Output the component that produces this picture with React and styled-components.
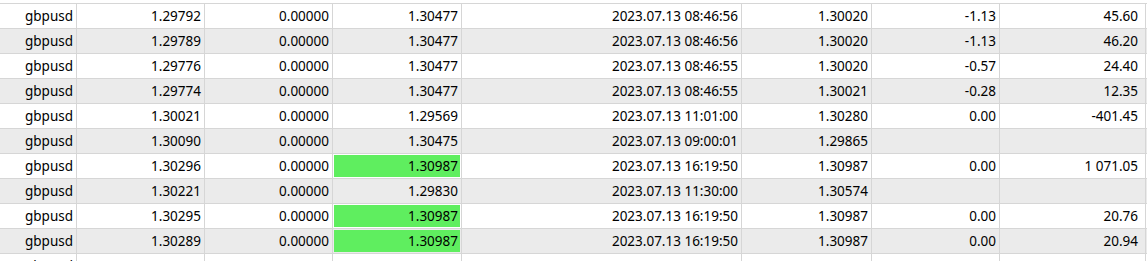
import React from "react";
import styled, { createGlobalStyle } from "styled-components";

const GlobalStyle = createGlobalStyle`
  html, body {
    margin: 0;
    padding: 0;
    background: #fff;
    overflow: hidden;
  }
  body {
    font-family: "Noto Sans", "Open Sans", sans-serif;
    font-size: 13.5px;
    color: #000;
  }
`;

const Table = styled.div`
  margin-top: 3px;
  border-top: 1px solid #d6d6d6;
  width: 1147px;
`;

const Row = styled.div`
  display: grid;
  grid-template-columns: 77px 128px 128px 129px 280px 130px 128px 146px;
  height: 25px;
  box-sizing: border-box;
  border-bottom: 1px solid #d6d6d6;
  background: ${(p) => (p.$odd ? "#ebebeb" : "#ffffff")};
`;

const Cell = styled.div`
  box-sizing: border-box;
  border-right: 1px solid #d6d6d6;
  padding: 1px 1px 0 1px;
  height: 24px;
`;

const Value = styled.div`
  height: 22px;
  line-height: 23px;
  text-align: right;
  padding-right: ${(p) => (p.$last ? "6px" : "2px")};
  white-space: nowrap;
  background: ${(p) => (p.$hit ? "#5fee5f" : "transparent")};
`;

const rows = [
  ["gbpusd", "1.29792", "0.00000", "1.30477", "2023.07.13 08:46:56", "1.30020", "-1.13", "45.60"],
  ["gbpusd", "1.29789", "0.00000", "1.30477", "2023.07.13 08:46:56", "1.30020", "-1.13", "46.20"],
  ["gbpusd", "1.29776", "0.00000", "1.30477", "2023.07.13 08:46:55", "1.30020", "-0.57", "24.40"],
  ["gbpusd", "1.29774", "0.00000", "1.30477", "2023.07.13 08:46:55", "1.30021", "-0.28", "12.35"],
  ["gbpusd", "1.30021", "0.00000", "1.29569", "2023.07.13 11:01:00", "1.30280", "0.00", "-401.45"],
  ["gbpusd", "1.30090", "0.00000", "1.30475", "2023.07.13 09:00:01", "1.29865", "", ""],
  ["gbpusd", "1.30296", "0.00000", "1.30987", "2023.07.13 16:19:50", "1.30987", "0.00", "1 071.05", true],
  ["gbpusd", "1.30221", "0.00000", "1.29830", "2023.07.13 11:30:00", "1.30574", "", ""],
  ["gbpusd", "1.30295", "0.00000", "1.30987", "2023.07.13 16:19:50", "1.30987", "0.00", "20.76", true],
  ["gbpusd", "1.30289", "0.00000", "1.30987", "2023.07.13 16:19:50", "1.30987", "0.00", "20.94", true],
  ["gbpusd", "1.29797", "0.00000", "1.29967", "2023.07.20 10:00:00", "1.29294", "0.00", "44.55"],
];

export default function App() {
  return (
    <>
      <GlobalStyle />
      <Table>
        {rows.map((r, i) => (
          <Row key={i} $odd={i % 2 === 1}>
            {r.slice(0, 8).map((v, j) => (
              <Cell key={j}>
                <Value $hit={j === 3 && r[8]} $last={j === 7}>
                  {v}
                </Value>
              </Cell>
            ))}
          </Row>
        ))}
      </Table>
    </>
  );
}
